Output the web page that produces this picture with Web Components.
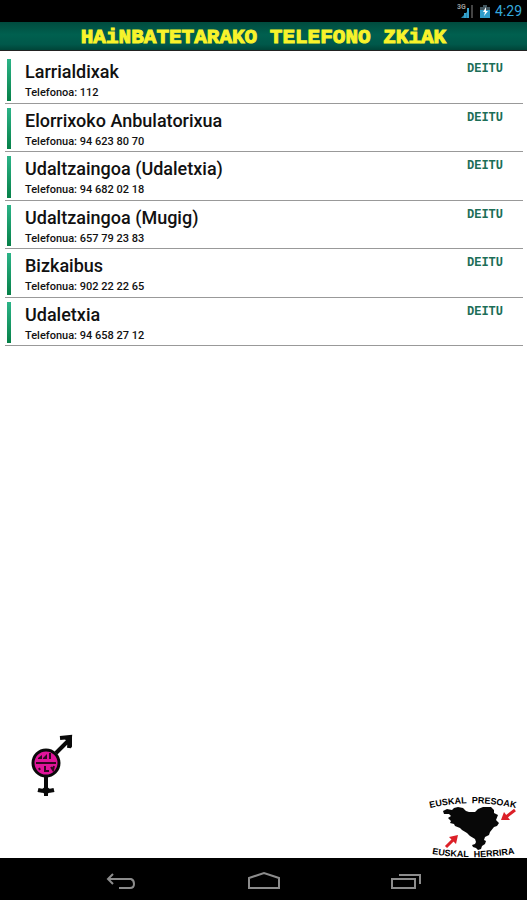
<!DOCTYPE html>
<html lang="eu">
<head>
<meta charset="utf-8">
<meta name="viewport" content="width=device-width, initial-scale=1">
<title>Hainbatetarako telefono zkiak</title>
<style>
body {
  margin: 0;
  background: #fff;
  font-family: Roboto, "Liberation Sans", sans-serif;
}
</style>
</head>
<body>
<phone-screen>
  <status-bar slot="top" time="4:29"></status-bar>
  <title-bar slot="top">HAiNBATETARAKO TELEFONO ZKiAK</title-bar>
  <phone-row name="Larrialdixak" label="Telefonoa" number="112"></phone-row>
  <phone-row name="Elorrixoko Anbulatorixua" label="Telefonua" number="94 623 80 70"></phone-row>
  <phone-row name="Udaltzaingoa (Udaletxia)" label="Telefonua" number="94 682 02 18"></phone-row>
  <phone-row name="Udaltzaingoa (Mugig)" label="Telefonua" number="657 79 23 83"></phone-row>
  <phone-row name="Bizkaibus" label="Telefonua" number="902 22 22 65"></phone-row>
  <phone-row name="Udaletxia" label="Telefonua" number="94 658 27 12"></phone-row>
  <logo-strip slot="bottom"></logo-strip>
  <nav-bar slot="bottom"></nav-bar>
</phone-screen>

<script>
// helper: put a template in an open shadow root
function attach(el, html) {
  const template = document.createElement("template");
  template.innerHTML = html;
  el.attachShadow({mode: "open"}).appendChild(template.content.cloneNode(true));
}

// SCREEN
class PhoneScreen extends HTMLElement {
  constructor() {
    super();
    attach(this, `
<style>
:host {
  display: flex;
  flex-direction: column;
  min-height: 100vh;
}
main {
  flex: 1;
  padding: 4px 4px 0 5px;
}
.list {
  display: grid;
  grid-auto-rows: 1fr;
  min-height: 291px;
}
</style>
<slot name="top"></slot>
<main><div class="list" role="list"><slot></slot></div></main>
<slot name="bottom"></slot>
`);
  }
}
customElements.define("phone-screen", PhoneScreen);

// STATUS BAR
class StatusBar extends HTMLElement {
  constructor() {
    super();
    attach(this, `
<style>
:host {
  display: flex;
  justify-content: flex-end;
  align-items: center;
  height: 22px;
  padding-right: 5px;
  gap: 5px;
  background: #000;
  color: #35a9dc;
  font-size: 14px;
}
svg { display: block; }
.net { font: bold 7px Roboto, sans-serif; fill: #9a9a9a; }
</style>
<svg width="18" height="16" viewBox="0 0 18 16" role="img" aria-label="3G">
  <text class="net" x="0" y="6">3G</text>
  <path d="M4 15L12 7V15Z" fill="#2688ad"/>
  <path d="M8 15V10M11 15V5" stroke="#35a0cc" stroke-width="2"/>
  <path d="M15 15V2" stroke="#444" stroke-width="2"/>
</svg>
<svg width="10" height="14" viewBox="0 0 10 14" role="img" aria-label="Battery">
  <path d="M3 1H7V3H10V14H0V3H3Z" fill="#42565f"/>
  <path d="M0 6H10V14H0Z" fill="#2f9ccb"/>
  <path d="M6 3L3 8H5L4 12L8 7H6Z" fill="#fff"/>
</svg>
<time></time>
`);
  }
  connectedCallback() {
    this.shadowRoot.querySelector("time").textContent = this.getAttribute("time");
  }
}
customElements.define("status-bar", StatusBar);

// TITLE
class TitleBar extends HTMLElement {
  constructor() {
    super();
    attach(this, `
<style>
:host {
  display: block;
  background: linear-gradient(#004b3e, #00604f 45%, #00584a 80%, #004438);
  border-bottom: 1px solid #222;
}
h1 {
  margin: 0;
  padding-top: 4px;
  color: #f8f32b;
  font: bold 21px/24px "Liberation Mono", monospace;
  text-align: center;
  white-space: nowrap;
  -webkit-text-stroke: 1px #f8f32b;
}
</style>
<h1><slot></slot></h1>
`);
  }
}
customElements.define("title-bar", TitleBar);

// ONE NUMBER OF THE LIST
class PhoneRow extends HTMLElement {
  constructor() {
    super();
    attach(this, `
<style>
:host {
  display: flex;
  align-items: flex-start;
  padding: 4px 20px 0 2px;
  border-bottom: 1px solid #999;
}
.mark {
  align-self: stretch;
  width: 4px;
  margin: 0 14px 2px 0;
  background: linear-gradient(#2cb488, #068048);
}
.text { flex: 1; color: #111; }
h2 {
  margin: 0;
  font-size: 18px;
  font-weight: 500;
  line-height: 25px;
}
p {
  margin: 0;
  font-size: 11px;
  font-weight: 500;
  line-height: 18px;
}
a {
  color: #1c6e57;
  font: bold 12px/20px "Liberation Mono", monospace;
  text-decoration: none;
}
</style>
<div class="mark"></div>
<div class="text"><h2></h2><p></p></div>
<a>DEITU</a>
`);
  }
  connectedCallback() {
    const number = this.getAttribute("number");
    this.setAttribute("role", "listitem");
    this.shadowRoot.querySelector("h2").textContent = this.getAttribute("name");
    this.shadowRoot.querySelector("p").textContent = this.getAttribute("label") + ": " + number;
    this.shadowRoot.querySelector("a").href = "tel:" + number.replace(/ /g, "");
  }
}
customElements.define("phone-row", PhoneRow);

// LOGOS AT THE BOTTOM
class LogoStrip extends HTMLElement {
  constructor() {
    super();
    attach(this, `
<style>
:host {
  display: flex;
  justify-content: space-between;
  align-items: flex-start;
  padding: 0 8px 0 28px;
}
svg { display: block; }
.map { margin-top: 60px; }
text { font: bold 9px "Liberation Sans", sans-serif; }
</style>
<svg class="ring" width="48" height="66" viewBox="0 0 48 66" role="img" aria-label="Berdintasuna">
  <path d="M28 21L40 9M32 6L42 5L41 16M18 44V64M10 58Q18 60 26 58" fill="none" stroke="#0a0a0a" stroke-width="4"/>
  <path d="M33 4H44V16L39 9Z" fill="#0a0a0a"/>
  <path d="M13 58L18 54L23 58L18 64Z" fill="#0a0a0a"/>
  <circle cx="18" cy="31" r="13" fill="#e0149a" stroke="#0a0a0a" stroke-width="3"/>
  <path d="M10 26L14 23V27H10ZM15 26L19 22V27H15ZM21 21H23V27H21ZM25 22V26" fill="#300820"/>
  <path d="M8 31H28" stroke="#300820" stroke-width="2"/>
  <path d="M11 36L12 38M17 34V39H21M23 35L25 38L26 34" fill="none" stroke="#300820" stroke-width="2"/>
</svg>
<svg class="map" width="90" height="66" viewBox="0 0 90 66" role="img" aria-label="Euskal presoak Euskal Herrira">
  <path id="up" d="M1 16Q45 6 90 17" fill="none"/>
  <path id="down" d="M3 62Q45 69 90 61" fill="none"/>
  <text><textPath href="#up">EUSKAL</textPath></text>
  <text><textPath href="#up" startOffset="42">PRESOAK</textPath></text>
  <text><textPath href="#down">EUSKAL</textPath></text>
  <text><textPath href="#down" startOffset="42">HERRIRA</textPath></text>
  <path d="M14 19L18 17L23 18L25 16L29 15L34 16L37 19L40 20L46 20L49 17L54 15L62 15L65 18L65 21L69 23L67 28L70 31L68 34L65 35L61 40L60 43L56 45L55 48L57 49L56 52L53 54L52 57L49 58L47 56L44 55L43 53L46 52L47 50L46 47L41 44L38 41L33 38L31 36L26 34L25 32L21 31L22 29L19 26L22 24L20 22L15 22Z" fill="#080808"/>
  <path d="M86 18L77 25M17 55L26 46" stroke="#dc2028" stroke-width="3"/>
  <path d="M72 28L75 20L81 28ZM29 43L20 45L27 52Z" fill="#dc2028"/>
</svg>
`);
  }
}
customElements.define("logo-strip", LogoStrip);

// ANDROID BUTTONS
class NavBar extends HTMLElement {
  constructor() {
    super();
    attach(this, `
<style>
:host { display: block; background: #000; }
nav {
  display: flex;
  justify-content: center;
}
button {
  flex: 0 0 27%;
  height: 42px;
  padding: 3px 0 0;
  border: 0;
  background: none;
}
svg {
  display: block;
  margin: 0 auto;
  fill: none;
  stroke: #8c8c8c;
  stroke-width: 2;
}
</style>
<nav>
  <button aria-label="Back"><svg width="32" height="20" viewBox="0 0 32 20"><path d="M8 3L3 8L8 13M3 8H26Q29 9 29 13T25 17H14"/></svg></button>
  <button aria-label="Home"><svg width="32" height="20" viewBox="0 0 32 20"><path d="M1 17V7L4 6L16 2L28 6L31 7V17Z"/></svg></button>
  <button aria-label="Recent apps"><svg width="32" height="20" viewBox="0 0 32 20"><path d="M2 8H25V17H2ZM9 4H30V13"/></svg></button>
</nav>
`);
  }
}
customElements.define("nav-bar", NavBar);
</script>
</body>
</html>
